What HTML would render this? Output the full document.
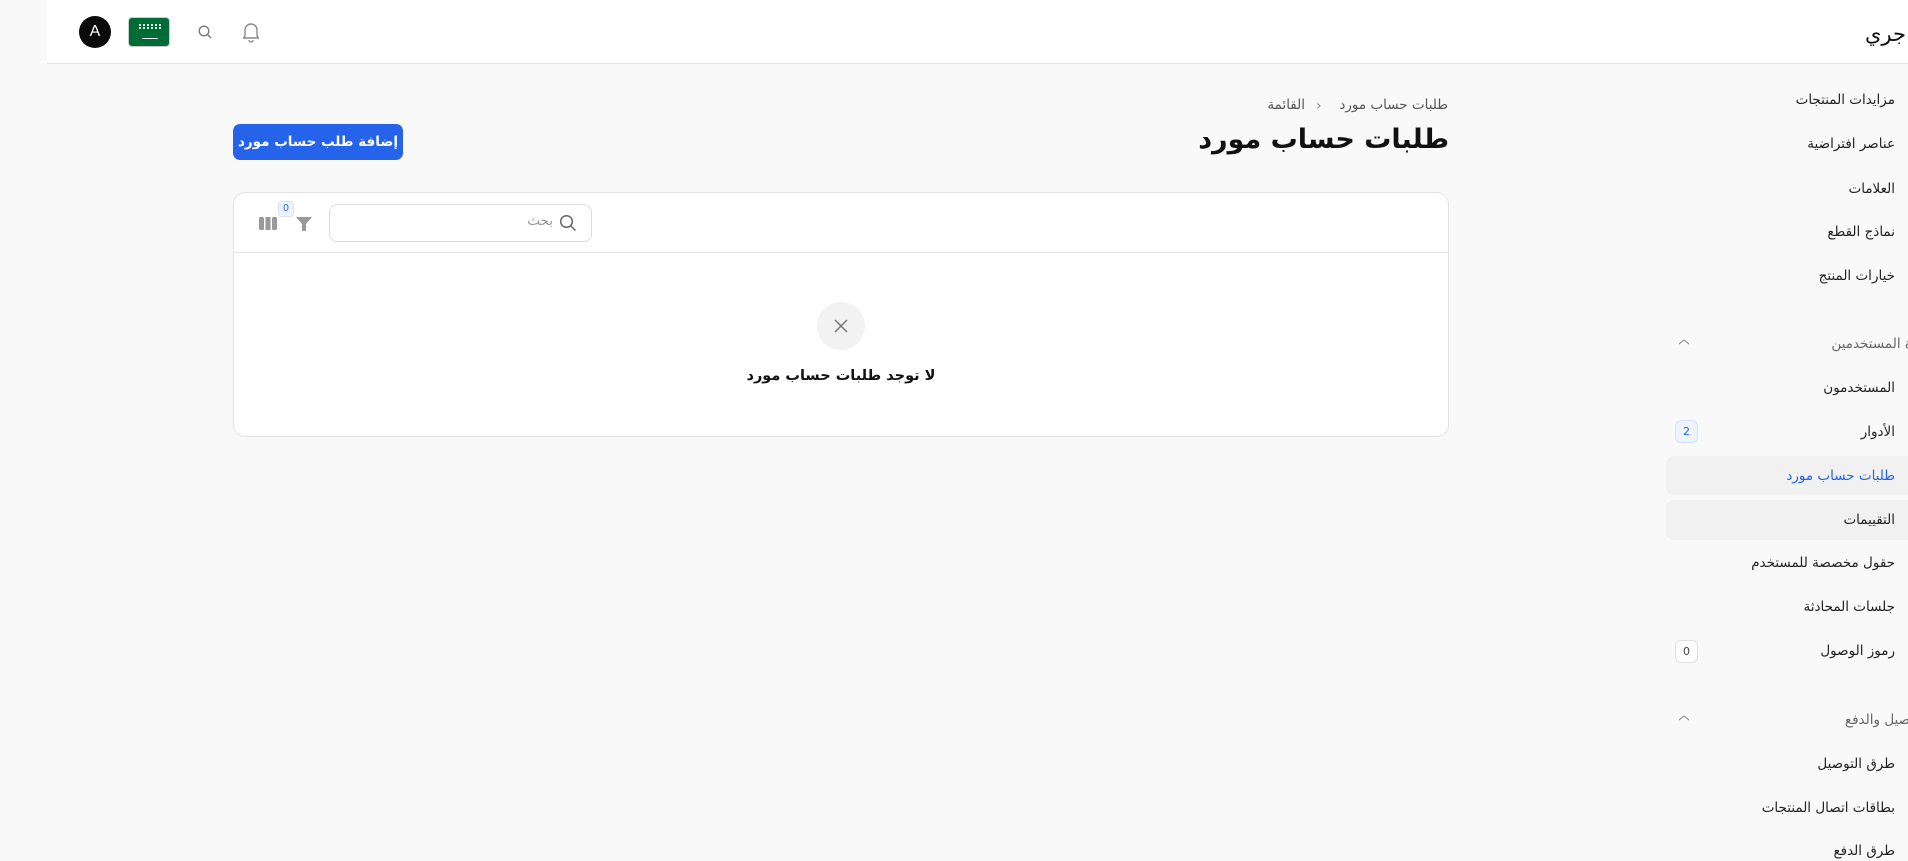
<!DOCTYPE html>
<html><head><meta charset="utf-8"><style>
*{margin:0;padding:0;box-sizing:border-box}
body{width:1908px;height:860px;overflow:hidden;background:#f9f9f9;font-family:"DejaVu Sans","Liberation Sans",sans-serif;position:relative;color:#111}
.a{position:absolute}
.r{position:absolute;direction:rtl;white-space:nowrap}
.hdr{left:47px;top:0;width:1861px;height:64px;background:#fff;border-bottom:1px solid #e3e3e3}
.si{right:13px;font-size:13.5px;color:#222;line-height:20px}
.sec{font-size:13.5px;color:#666;line-height:20px}
.badge{position:absolute;left:1675px;width:23px;height:23px;border-radius:6px;font-size:11px;text-align:center;line-height:21px}
</style></head><body>
<div class="a hdr"></div>
<div class="r" style="right:2px;top:22px;font-size:21px;color:#111">جري</div>
<div class="a" style="left:79px;top:16px;width:32px;height:32px;border-radius:50%;background:#0a0a0a;color:#fff;font-size:16px;text-align:center;line-height:32px;font-family:'Liberation Sans'">A</div>
<div class="a" style="left:128px;top:17px;width:42px;height:30px;border-radius:4px;background:#006c35;border:1px solid #ccc">
<div class="a" style="left:10px;top:6px;width:22px;height:5px;border-top:2px dotted #fff;border-bottom:2px dotted #fff;opacity:.9"></div>
<div class="a" style="left:13px;top:20px;width:16px;height:1px;background:#fff"></div></div>
<svg class="a" style="left:197px;top:24px" width="16" height="16" viewBox="0 0 16 16"><circle cx="7" cy="7" r="4.8" fill="none" stroke="#777" stroke-width="1.3"/><path d="M10.5 10.5L14 14" stroke="#777" stroke-width="1.3"/></svg>
<svg class="a" style="left:241px;top:21px" width="20" height="22" viewBox="0 0 20 22"><path d="M4 15V9a6 6 0 0112 0v6l1.5 2h-15z" fill="none" stroke="#888" stroke-width="1.4" stroke-linejoin="round"/><path d="M8 19a2 2 0 004 0" fill="none" stroke="#888" stroke-width="1.4"/></svg>

<div class="r" style="right:460px;top:97px;font-size:13.5px;color:#555">طلبات حساب مورد</div>
<div class="a" style="left:1316px;top:98px;font-size:14px;color:#888">›</div>
<div class="r" style="right:603px;top:97px;font-size:13.5px;color:#555">القائمة</div>
<div class="r" style="right:459px;top:124px;font-size:27px;font-weight:bold;color:#111">طلبات حساب مورد</div>
<div class="a" style="left:233px;top:124px;width:170px;height:36px;border-radius:7px;background:#2563eb;color:#fff;font-size:13.5px;font-weight:bold;text-align:center;line-height:36px;direction:rtl">إضافة طلب حساب مورد</div>

<div class="a" style="left:233px;top:192px;width:1216px;height:245px;background:#fff;border:1px solid #e3e3e3;border-radius:12px">
<div class="a" style="left:0;top:59px;width:1214px;height:1px;background:#e3e3e3"></div>
<div class="a" style="left:95px;top:11px;width:263px;height:38px;border:1px solid #ddd;border-radius:8px"></div>
<svg class="a" style="left:325px;top:21px" width="18" height="18" viewBox="0 0 18 18"><circle cx="7.5" cy="7.5" r="5.8" fill="none" stroke="#666" stroke-width="1.5"/><path d="M12 12l4.5 4.5" stroke="#666" stroke-width="1.5"/></svg>
<div class="r" style="right:895px;top:20px;font-size:13.5px;color:#999">بحث</div>
<svg class="a" style="left:24px;top:22px" width="20" height="16" viewBox="0 0 20 16"><rect x="1" y="2" width="5" height="13" rx="1.5" fill="#999"/><rect x="7.5" y="2" width="5" height="13" fill="#999"/><rect x="14" y="2" width="5" height="13" rx="1.5" fill="#999"/></svg>
<svg class="a" style="left:61px;top:21px" width="18" height="18" viewBox="0 0 18 18"><path d="M1 3h16l-6 7v7h-4v-7z" fill="#999"/></svg>
<div class="a" style="left:44px;top:8px;width:16px;height:16px;border-radius:4px;background:#eef4ff;border:1px solid #d6e2fb;color:#2563eb;font-size:10px;text-align:center;line-height:14px;font-family:'Liberation Sans'">0</div>
<div class="a" style="left:583px;top:109px;width:48px;height:48px;border-radius:50%;background:#f2f2f2"></div>
<svg class="a" style="left:598px;top:124px" width="18" height="18" viewBox="0 0 18 18"><path d="M3 3l12 12M15 3L3 15" stroke="#777" stroke-width="1.5"/></svg>
<div class="r" style="left:430px;width:354px;text-align:center;top:175px;font-size:14.5px;font-weight:bold;color:#111">لا توجد طلبات حساب مورد</div>
</div>

<div class="a" style="left:1666px;top:456px;width:250px;height:39px;border-radius:8px;background:#f1f1f1"></div>
<div class="a" style="left:1666px;top:500px;width:250px;height:40px;border-radius:8px;background:#f1f1f1"></div>
<div class="badge" style="top:420px;background:#eef4ff;border:1px solid #d6e2fb;color:#2563eb">2</div>
<div class="badge" style="top:640px;background:#fff;border:1px solid #e0e0e0;color:#444">0</div>
<svg class="a" style="left:1678px;top:338px" width="12" height="8" viewBox="0 0 12 8"><path d="M1 6l5-4 5 4" fill="none" stroke="#999" stroke-width="1.2"/></svg>
<svg class="a" style="left:1678px;top:714px" width="12" height="8" viewBox="0 0 12 8"><path d="M1 6l5-4 5 4" fill="none" stroke="#999" stroke-width="1.2"/></svg>

<div class="r si" style="top:90px">مزايدات المنتجات</div>
<div class="r si" style="top:134px">عناصر افتراضية</div>
<div class="r si" style="top:179px">العلامات</div>
<div class="r si" style="top:222px">نماذج القطع</div>
<div class="r si" style="top:266px">خيارات المنتج</div>
<div class="r sec" style="right:-24px;top:334px">إدارة المستخدمين</div>
<div class="r si" style="top:378px">المستخدمون</div>
<div class="r si" style="top:422px">الأدوار</div>
<div class="r si" style="top:466px;color:#2563eb">طلبات حساب مورد</div>
<div class="r si" style="top:510px">التقييمات</div>
<div class="r si" style="top:553px">حقول مخصصة للمستخدم</div>
<div class="r si" style="top:597px">جلسات المحادثة</div>
<div class="r si" style="top:641px">رموز الوصول</div>
<div class="r sec" style="right:-21px;top:710px">التوصيل والدفع</div>
<div class="r si" style="top:754px">طرق التوصيل</div>
<div class="r si" style="top:798px">بطاقات اتصال المنتجات</div>
<div class="r si" style="top:841px">طرق الدفع</div>
</body></html>
